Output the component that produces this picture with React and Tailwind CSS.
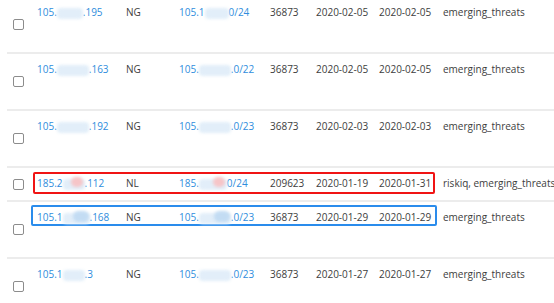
import React from "react";

const Blob = ({ w, tint }) => (
  <span className="relative inline-block align-middle h-[11px]" style={{ width: w }}>
    <span className="absolute inset-0 rounded-[4px] bg-[#e2eef9] blur-[1.5px]" />
    {tint === "pink" && (
      <span className="absolute right-[2px] top-[-2px] h-[10px] w-[12px] rounded-full bg-[#f6c5c8] blur-[1.5px]" />
    )}
    {tint === "blue" && (
      <span className="absolute right-[1px] top-[-2px] h-[11px] w-[16px] rounded-full bg-[#c3dcf3] blur-[1.5px]" />
    )}
  </span>
);

const rows = [
  { ip: ["105.", 26, ".195"], cc: "NG", nb: ["105.1", 24, "0/24"], asn: "36873", d1: "2020-02-05", d2: "2020-02-05", src: "emerging_threats", tall: true },
  { ip: ["105.", 32, ".163"], cc: "NG", nb: ["105.", 32, ".0/22"], asn: "36873", d1: "2020-02-05", d2: "2020-02-05", src: "emerging_threats", tall: true },
  { ip: ["105.", 32, ".192"], cc: "NG", nb: ["105.", 32, ".0/23"], asn: "36873", d1: "2020-02-03", d2: "2020-02-03", src: "emerging_threats", tall: true },
  { ip: ["185.2", 22, ".112"], cc: "NL", nb: ["185.", 28, "0/24"], asn: "209623", d1: "2020-01-19", d2: "2020-01-31", src: "riskiq, emerging_threats", tall: false, box: "red", tint: "pink" },
  { ip: ["105.1", 27, ".168"], cc: "NG", nb: ["105.", 32, ".0/23"], asn: "36873", d1: "2020-01-29", d2: "2020-01-29", src: "emerging_threats", tall: true, box: "blue", tint: "blue" },
  { ip: ["105.1", 22, ".3"], cc: "NG", nb: ["105.", 32, ".0/23"], asn: "36873", d1: "2020-01-27", d2: "2020-01-27", src: "emerging_threats", tall: true },
];

function Row({ r }) {
  return (
    <div
      className={`relative ml-[7px] flex border-b-2 border-[#ececec] ${r.tall ? "h-[57px]" : "h-[34px]"}`}
    >
      {r.box === "red" && (
        <div className="absolute left-[26px] top-[4px] h-[22px] w-[402px] rounded-[2px] border-2 border-[#f01414]" />
      )}
      {r.box === "blue" && (
        <div className="absolute left-[24px] top-[3px] h-[21px] w-[406px] rounded-[2px] border-2 border-[#2a8cec]" />
      )}
      <div className="flex w-[30px] shrink-0 items-center pl-[6px]">
        <span className="block h-[11px] w-[11px] rounded-[2px] border border-[#8c8c8c] bg-white" />
      </div>
      <div className="w-[89px] shrink-0 whitespace-nowrap pt-[8px] leading-[14px] text-[#2f8ddd]">
        {r.ip[0]}
        <Blob w={r.ip[1]} tint={r.tint} />
        {r.ip[2]}
      </div>
      <div className="w-[53px] shrink-0 pt-[8px] leading-[14px]">{r.cc}</div>
      <div className="w-[91px] shrink-0 whitespace-nowrap pt-[8px] leading-[14px] text-[#2f8ddd]">
        {r.nb[0]}
        <Blob w={r.nb[1]} tint={r.tint} />
        {r.nb[2]}
      </div>
      <div className="w-[46px] shrink-0 pt-[8px] leading-[14px]">{r.asn}</div>
      <div className="w-[63px] shrink-0 pt-[8px] leading-[14px]">{r.d1}</div>
      <div className="w-[64px] shrink-0 pt-[8px] leading-[14px]">{r.d2}</div>
      <div className="shrink-0 whitespace-nowrap pt-[8px] leading-[14px]">{r.src}</div>
    </div>
  );
}

export default function App() {
  return (
    <div
      className="h-[303px] w-[554px] overflow-hidden bg-white text-[10px] text-[#3d3d3d]"
      style={{ fontFamily: '"Open Sans", "Liberation Sans", sans-serif' }}
    >
      <div className="-mt-[3px]">
        {rows.map((r, i) => (
          <Row key={i} r={r} />
        ))}
      </div>
    </div>
  );
}
